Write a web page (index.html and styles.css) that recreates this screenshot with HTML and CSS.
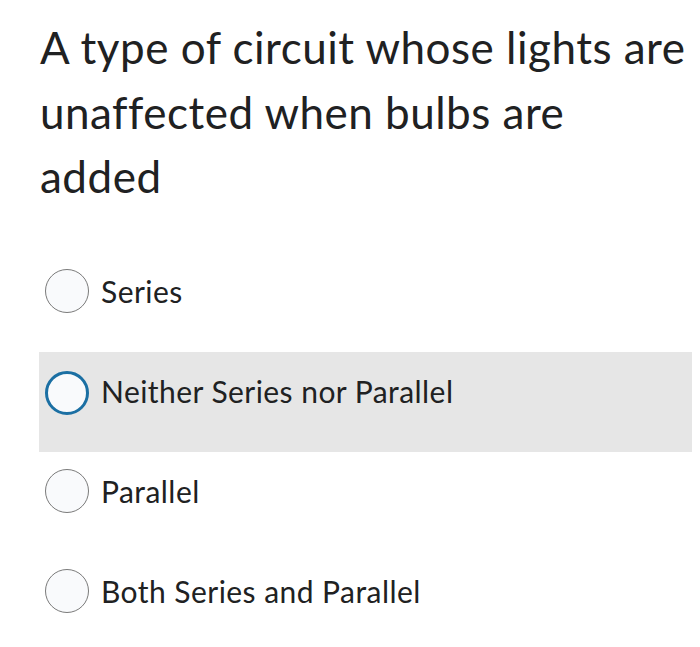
FILE: index.html
```html
<!DOCTYPE html>
<html>
<head>
<meta charset="utf-8">
<link rel="stylesheet" href="styles.css">
</head>
<body>
<div class="quiz">
  <h1 class="question">A type of circuit whose lights are unaffected when bulbs are added</h1>
  <div class="options">
    <label class="option"><span class="radio"></span><span class="label">Series</span></label>
    <label class="option hover"><span class="radio focus"></span><span class="label">Neither Series nor Parallel</span></label>
    <label class="option"><span class="radio"></span><span class="label">Parallel</span></label>
    <label class="option"><span class="radio"></span><span class="label">Both Series and Parallel</span></label>
  </div>
</div>
</body>
</html>
```
FILE: styles.css
```css
html, body {
  margin: 0;
  padding: 0;
  background: #ffffff;
}
body {
  font-family: Lato, "Open Sans", sans-serif;
  color: #202122;
  overflow: hidden;
}
.quiz {
  padding: 15px 8px 0 39px;
}
.question {
  margin: 0;
  font-size: 44px;
  font-weight: 400;
  letter-spacing: 0.5px;
  line-height: 64.5px;
  padding-left: 1px;
  width: 652px;
}
.options {
  margin-top: 43px;
  display: flex;
  flex-direction: column;
}
.option {
  height: 100px;
  box-sizing: border-box;
  padding: 17px 0 0 6px;
  display: flex;
  align-items: flex-start;
  gap: 12px;
}
.option.hover {
  background: #e6e6e6;
}
.radio {
  width: 44px;
  height: 44px;
  box-sizing: border-box;
  border-radius: 50%;
  border: 1px solid #7a7a7a;
  background: #f9fafc;
  flex: none;
}
.radio.focus {
  border: 3px solid #1b6fa3;
  margin-top: 2px;
}
.label {
  font-size: 30px;
  letter-spacing: 0.45px;
  line-height: 44px;
}
```
